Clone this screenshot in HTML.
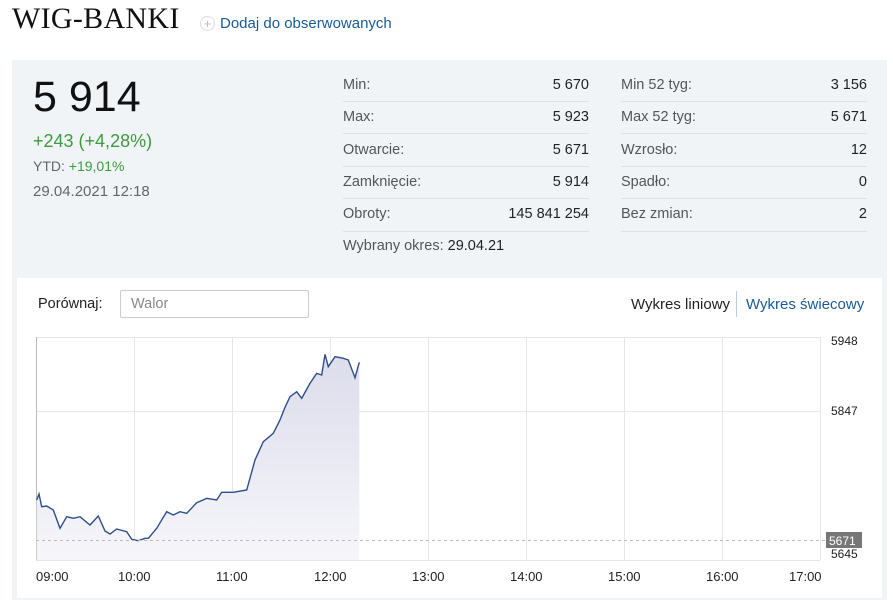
<!DOCTYPE html>
<html><head><meta charset="utf-8"><style>
body{margin:0;width:893px;height:590px;overflow:hidden;background:#fff;font-family:"Liberation Sans",sans-serif;position:relative}
.a{position:absolute;white-space:nowrap}
.panel{position:absolute;left:12px;top:60px;width:875px;height:540px;background:#f1f4f7}
.card{position:absolute;left:17px;top:278px;width:865px;height:320px;background:#fff}
.lbl{color:#555;font-size:14.5px}
.val{color:#222;font-size:14.5px;text-align:right}
.sep{position:absolute;height:1px;background:#dde2e8}
</style></head><body>
<div class="a" style="left:12px;top:2px;font-family:'Liberation Serif',serif;font-size:30px;color:#111;letter-spacing:0.3px">WIG-BANKI</div>
<div class="a" style="left:200px;top:16px;width:13px;height:13px;border:1px solid #ddd;border-radius:50%;color:#bbb;font-size:13px;line-height:13px;text-align:center">+</div>
<div class="a" style="left:220px;top:15px;font-size:15px;color:#1a5a96">Dodaj do obserwowanych</div>
<div class="panel"></div>
<div class="a" style="left:33px;top:73px;font-size:43px;color:#111">5 914</div>
<div class="a" style="left:33px;top:131px;font-size:18px;color:#3d9a3d">+243 (+4,28%)</div>
<div class="a" style="left:33px;top:158px;font-size:14px;color:#666">YTD: <span style="color:#3d9a3d">+19,01%</span></div>
<div class="a" style="left:33px;top:183px;font-size:15px;color:#666">29.04.2021 12:18</div>

<div class="a lbl" style="left:343px;top:77px">Min:</div><div class="a val" style="left:489px;width:100px;top:77px">5 670</div>
<div class="a lbl" style="left:343px;top:109px">Max:</div><div class="a val" style="left:489px;width:100px;top:109px">5 923</div>
<div class="a lbl" style="left:343px;top:142px">Otwarcie:</div><div class="a val" style="left:489px;width:100px;top:142px">5 671</div>
<div class="a lbl" style="left:343px;top:174px">Zamknięcie:</div><div class="a val" style="left:489px;width:100px;top:174px">5 914</div>
<div class="a lbl" style="left:343px;top:206px">Obroty:</div><div class="a val" style="left:439px;width:150px;top:206px">145 841 254</div>
<div class="a lbl" style="left:343px;top:238px">Wybrany okres: <span style="color:#222">29.04.21</span></div>
<div class="a lbl" style="left:621px;top:77px">Min 52 tyg:</div><div class="a val" style="left:767px;width:100px;top:77px">3 156</div>
<div class="a lbl" style="left:621px;top:109px">Max 52 tyg:</div><div class="a val" style="left:767px;width:100px;top:109px">5 671</div>
<div class="a lbl" style="left:621px;top:142px">Wzrosło:</div><div class="a val" style="left:767px;width:100px;top:142px">12</div>
<div class="a lbl" style="left:621px;top:174px">Spadło:</div><div class="a val" style="left:767px;width:100px;top:174px">0</div>
<div class="a lbl" style="left:621px;top:206px">Bez zmian:</div><div class="a val" style="left:767px;width:100px;top:206px">2</div>
<div class="sep" style="left:343px;width:246px;top:101px"></div><div class="sep" style="left:343px;width:246px;top:133px"></div><div class="sep" style="left:343px;width:246px;top:166px"></div><div class="sep" style="left:343px;width:246px;top:198px"></div><div class="sep" style="left:343px;width:246px;top:231px"></div>
<div class="sep" style="left:621px;width:246px;top:101px"></div><div class="sep" style="left:621px;width:246px;top:133px"></div><div class="sep" style="left:621px;width:246px;top:166px"></div><div class="sep" style="left:621px;width:246px;top:198px"></div><div class="sep" style="left:621px;width:246px;top:231px"></div>

<div class="card"></div>
<div class="a" style="left:38px;top:296px;font-size:14.5px;color:#222">Porównaj:</div>
<div class="a" style="left:120px;top:290px;width:177px;height:26px;border:1px solid #ccc;border-radius:2px;background:#fff;font-size:14.5px;color:#888;line-height:26px;padding-left:10px">Walor</div>
<div class="a" style="left:631px;top:296px;font-size:15px;color:#222">Wykres liniowy</div>
<div class="a" style="left:736px;top:291px;width:1px;height:26px;background:#bcd"></div>
<div class="a" style="left:746px;top:296px;font-size:15px;color:#1a5a96">Wykres świecowy</div>

<svg class="a" style="left:0;top:0" width="893" height="590">
<defs><linearGradient id="g" x1="0" y1="0" x2="0" y2="1"><stop offset="0" stop-color="#dcdcec"/><stop offset="1" stop-color="#f6f6fa"/></linearGradient></defs>
<g stroke="#e6e6e6" stroke-width="1">
<line x1="36" y1="337.5" x2="820" y2="337.5"/><line x1="36" y1="411.5" x2="820" y2="411.5"/><line x1="36" y1="560.5" x2="820" y2="560.5"/>
<line x1="134.5" y1="337" x2="134.5" y2="560"/><line x1="232.5" y1="337" x2="232.5" y2="560"/><line x1="330.5" y1="337" x2="330.5" y2="560"/><line x1="428.5" y1="337" x2="428.5" y2="560"/><line x1="526.5" y1="337" x2="526.5" y2="560"/><line x1="624.5" y1="337" x2="624.5" y2="560"/><line x1="722.5" y1="337" x2="722.5" y2="560"/><line x1="820.5" y1="337" x2="820.5" y2="560"/>
</g>
<line x1="36.5" y1="337" x2="36.5" y2="560" stroke="#bbb"/>
<path d="M36.7,500 L39,494 41.7,506.7 46.7,506 53.3,510 60,528.3 66.7,516.7 73.3,518.3 80,516.7 90,525 98.3,516 105,531 110,534 116.7,529 126.7,531.7 131.7,539.3 138.3,540.7 145,538.3 148.3,538.3 156.7,528.3 166.7,511.7 173.3,515 180,511.7 186.7,513.3 196.7,502.7 206.7,498.3 216.7,500 221.7,492.3 233.3,492.3 246.7,490 255,460 263.3,441.7 273.3,433.3 280,420 285,407.3 290,396.7 296.7,391.7 301.7,398.3 310,383.3 316.7,373.3 321.7,375 325,354.3 328.3,366.7 335,356.7 343.3,358.3 348.3,360 355,377.7 359.3,362.3 L359.3,560 36.7,560Z" fill="url(#g)"/>
<path d="M36.7,500 L39,494 41.7,506.7 46.7,506 53.3,510 60,528.3 66.7,516.7 73.3,518.3 80,516.7 90,525 98.3,516 105,531 110,534 116.7,529 126.7,531.7 131.7,539.3 138.3,540.7 145,538.3 148.3,538.3 156.7,528.3 166.7,511.7 173.3,515 180,511.7 186.7,513.3 196.7,502.7 206.7,498.3 216.7,500 221.7,492.3 233.3,492.3 246.7,490 255,460 263.3,441.7 273.3,433.3 280,420 285,407.3 290,396.7 296.7,391.7 301.7,398.3 310,383.3 316.7,373.3 321.7,375 325,354.3 328.3,366.7 335,356.7 343.3,358.3 348.3,360 355,377.7 359.3,362.3" fill="none" stroke="#2f4f8a" stroke-width="1.4"/>
<line x1="36" y1="540.5" x2="826" y2="540.5" stroke="#bbb" stroke-dasharray="3,3"/>
<rect x="826" y="532" width="36" height="16" fill="#777"/>
<g font-family="Liberation Sans" font-size="12" fill="#222">
<text x="831" y="345">5948</text><text x="831" y="415">5847</text><text x="831" y="558">5645</text>
<text x="829" y="545" fill="#fff">5671</text>
<g font-size="13"><text x="36" y="581">09:00</text><text x="118" y="581">10:00</text><text x="216" y="581">11:00</text><text x="314" y="581">12:00</text><text x="412" y="581">13:00</text><text x="510" y="581">14:00</text><text x="608" y="581">15:00</text><text x="706" y="581">16:00</text><text x="789" y="581">17:00</text></g>
</g>
</svg>
</body></html>
